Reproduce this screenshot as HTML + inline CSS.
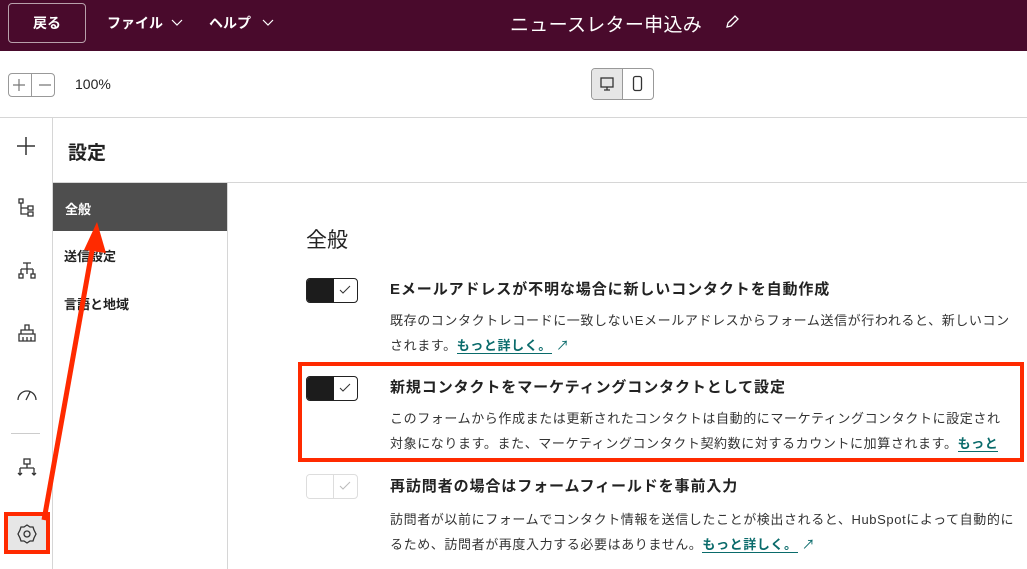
<!DOCTYPE html>
<html><head><meta charset="utf-8"><style>
*{margin:0;padding:0;box-sizing:border-box}
body{width:1027px;height:569px;overflow:hidden;background:#fff;font-family:"Liberation Sans","Noto Sans CJK JP",sans-serif;color:#222;position:relative}
.a{position:absolute}
.hdr{left:0;top:0;width:1027px;height:51px;background:#490a2c}
.btn{left:8px;top:3px;width:78px;height:40px;border:1px solid #b8a0ab;border-radius:4px;color:#fff;font-weight:bold;font-size:14px;text-align:center;line-height:38px}
.menu{color:#fff;font-weight:bold;font-size:14px;top:13px}
.title{left:510px;top:10px;color:#fff;font-size:19px;letter-spacing:0.3px}
.tb{left:0;top:51px;width:1027px;height:67px;border-bottom:1px solid #d6d6d6}
.rail{left:52px;top:118px;width:1px;height:451px;background:#d6d6d6}
.nav{left:227px;top:183px;width:1px;height:386px;background:#d6d6d6}
.sh{left:53px;top:182px;width:974px;height:1px;background:#d6d6d6}
.tog{width:52px;height:25px;border:1px solid #222;border-radius:4px;overflow:hidden}
.tog i{position:absolute;left:0;top:0;width:27px;height:25px;background:#1c1c1c}
.tog svg{position:absolute;left:32px;top:6px}
.tt{left:390px;font-size:15px;font-weight:bold;white-space:nowrap;letter-spacing:0.9px}
.d{left:390px;font-size:13px;white-space:nowrap;color:#333;letter-spacing:0.6px}
.lk{color:#0a6b6b;font-weight:bold;border-bottom:1.5px solid #0a6b6b}
.ic{stroke:#333;fill:none;stroke-width:1.3}
</style></head><body>
<div class="a hdr"></div>
<div class="a btn">戻る</div>
<div class="a menu" style="left:107px">ファイル</div>
<svg class="a" style="left:171px;top:19px" width="12" height="8"><path d="M1 1l5 5 5-5" stroke="#fff" fill="none" stroke-width="1.2"/></svg>
<div class="a menu" style="left:209px">ヘルプ</div>
<svg class="a" style="left:262px;top:19px" width="12" height="8"><path d="M1 1l5 5 5-5" stroke="#fff" fill="none" stroke-width="1.2"/></svg>
<div class="a title">ニュースレター申込み</div>
<svg class="a" style="left:724px;top:14px" width="16" height="16"><path d="M3 13 L4 9 L11 2 L14 5 L7 12 Z" stroke="#fff" fill="none" stroke-width="1.3"/></svg>
<div class="a tb"></div>
<div class="a" style="left:8px;top:73px;width:47px;height:24px;border:1px solid #999;border-radius:4px"></div>
<div class="a" style="left:31px;top:74px;width:1px;height:22px;background:#999"></div>
<svg class="a" style="left:12px;top:78px" width="40" height="14"><path d="M7 1v12M1 7h12M27 7h12" stroke="#777" stroke-width="1.2"/></svg>
<div class="a" style="left:75px;top:76px;font-size:14px">100%</div>
<div class="a" style="left:591px;top:68px;width:63px;height:32px;border:1px solid #999;border-radius:4px;overflow:hidden"><div style="width:31px;height:30px;background:#e6e6e6;border-right:1px solid #999"></div></div>
<svg class="a" style="left:599px;top:76px" width="16" height="16"><rect x="2" y="2" width="12" height="9" class="ic"/><path d="M8 11v3M5 14h6" class="ic"/></svg>
<svg class="a" style="left:632px;top:75px" width="12" height="18"><rect x="1.5" y="1.5" width="8" height="14" rx="2" class="ic"/></svg>
<div class="a rail"></div><div class="a sh"></div><div class="a nav"></div>
<div class="a" style="left:68px;top:138px;font-size:19px;font-weight:bold">設定</div>
<div class="a" style="left:53px;top:183px;width:174px;height:48px;background:#4e4e4e;color:#fff;font-weight:bold;font-size:13px;padding:16px 0 0 12px">全般</div>
<div class="a" style="left:64px;top:246px;font-size:13px;font-weight:bold">送信設定</div>
<div class="a" style="left:64px;top:294px;font-size:13px;font-weight:bold">言語と地域</div>
<svg class="a" style="left:15px;top:135px" width="22" height="22"><path d="M11 2v18M2 11h18" stroke="#333" stroke-width="1.5"/></svg>
<svg class="a" style="left:17px;top:197px" width="20" height="22"><rect x="2" y="2" width="4" height="4" class="ic"/><rect x="11" y="9" width="5" height="4" class="ic"/><rect x="11" y="15" width="5" height="4" class="ic"/><path d="M4 6v11h7M4 11h7" class="ic"/></svg>
<svg class="a" style="left:16px;top:260px" width="22" height="20"><path d="M7 3h8M11 3v6M5 9h12M5 9v5M17 9v5M11 9v5" class="ic"/><rect x="3" y="14" width="4" height="4" class="ic"/><rect x="15" y="14" width="4" height="4" class="ic"/></svg>
<svg class="a" style="left:16px;top:322px" width="22" height="22"><path d="M3 19h16V12H3Z M5 12V8h12v4M9 8V3h4v5M7 19v-4M11 19v-4M15 19v-4" class="ic"/></svg>
<svg class="a" style="left:15px;top:386px" width="24" height="20"><path d="M3 14a9 9 0 0 1 18 0M11 14l4-8" class="ic"/></svg>
<div class="a" style="left:11px;top:433px;width:29px;height:1px;background:#ccc"></div>
<svg class="a" style="left:16px;top:457px" width="22" height="22"><rect x="8" y="2" width="6" height="5" class="ic"/><path d="M11 7v4M4 11h14M4 11v7M18 11v7M2 16l2 2 2-2M16 16l2 2 2-2" class="ic"/></svg>
<div class="a" style="left:8px;top:515px;width:38px;height:36px;background:#e6e6e6"></div>
<svg class="a" style="left:16px;top:523px" width="22" height="22"><path d="M11 2l3 2 3 0 1 3 2 4-2 4-1 3-3 0-3 2-3-2-3 0-1-3-2-4 2-4 1-3 3 0z" class="ic"/><circle cx="11" cy="11" r="3" class="ic"/></svg>
<div class="a" style="left:4px;top:512px;width:46px;height:42px;border:4px solid #ff2a00"></div>
<svg class="a" style="left:0;top:0" width="200" height="569"><line x1="44" y1="520" x2="93" y2="245" stroke="#ff2a00" stroke-width="5"/><polygon points="97,222 84,250 106,253" fill="#ff2a00"/></svg>
<div class="a" style="left:306px;top:224px;font-size:21px">全般</div>
<div class="a tog" style="left:306px;top:278px"><i></i><svg width="12" height="10"><path d="M1 5l3 3 7-7" stroke="#333" fill="none" stroke-width="1"/></svg></div>
<div class="a tt" style="top:278px">Eメールアドレスが不明な場合に新しいコンタクトを自動作成</div>
<div class="a d" style="top:310px">既存のコンタクトレコードに一致しないEメールアドレスからフォーム送信が行われると、新しいコン</div>
<div class="a d" style="top:335px">されます。<span class="lk">もっと詳しく。</span> <span style="color:#0a6b6b">↗</span></div>
<div class="a tog" style="left:306px;top:376px"><i></i><svg width="12" height="10"><path d="M1 5l3 3 7-7" stroke="#333" fill="none" stroke-width="1"/></svg></div>
<div class="a tt" style="top:376px">新規コンタクトをマーケティングコンタクトとして設定</div>
<div class="a d" style="top:408px">このフォームから作成または更新されたコンタクトは自動的にマーケティングコンタクトに設定され</div>
<div class="a d" style="top:433px">対象になります。また、マーケティングコンタクト契約数に対するカウントに加算されます。<span class="lk">もっと</span></div>
<div class="a" style="left:298px;top:362px;width:726px;height:100px;border:4px solid #ff2a00"></div>
<div class="a tog" style="left:306px;top:474px;border-color:#ddd"><i style="background:#fff;border-right:1px solid #ddd"></i><svg width="12" height="10"><path d="M1 5l3 3 7-7" stroke="#bbb" fill="none" stroke-width="1"/></svg></div>
<div class="a tt" style="top:475px">再訪問者の場合はフォームフィールドを事前入力</div>
<div class="a d" style="top:509px">訪問者が以前にフォームでコンタクト情報を送信したことが検出されると、HubSpotによって自動的に</div>
<div class="a d" style="top:534px">るため、訪問者が再度入力する必要はありません。<span class="lk">もっと詳しく。</span> <span style="color:#0a6b6b">↗</span></div>
</body></html>
